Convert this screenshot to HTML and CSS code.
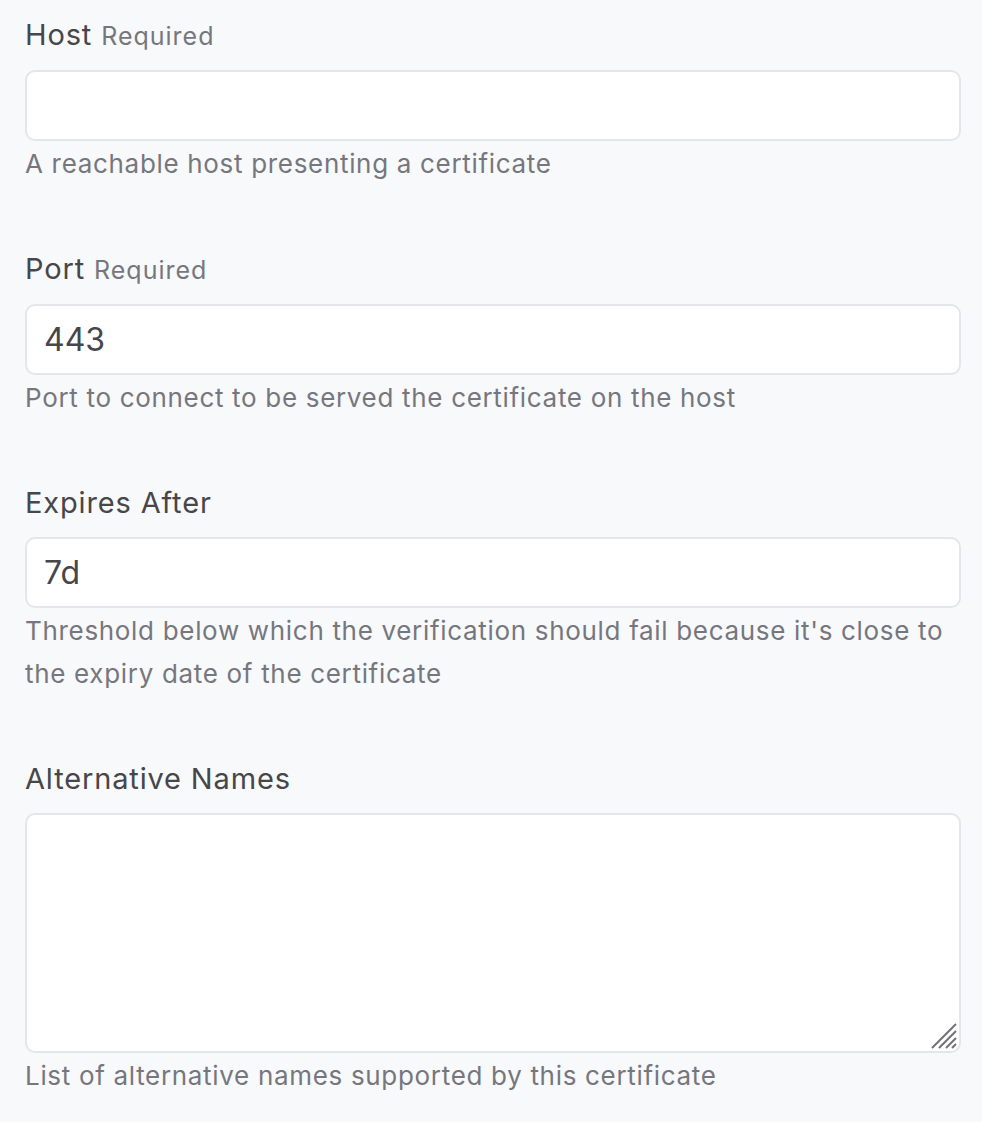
FILE: index.html
```html
<!DOCTYPE html>
<html>
<head>
<meta charset="utf-8">
<link rel="stylesheet" href="styles.css">
</head>
<body>
<form class="form">
  <div class="field">
    <label class="label">Host <span class="req">Required</span></label>
    <input class="input" type="text" value="">
    <p class="help">A reachable host presenting a certificate</p>
  </div>
  <div class="field">
    <label class="label">Port <span class="req">Required</span></label>
    <input class="input" type="text" value="443">
    <p class="help">Port to connect to be served the certificate on the host</p>
  </div>
  <div class="field">
    <label class="label">Expires After</label>
    <input class="input" type="text" value="7d">
    <p class="help">Threshold below which the verification should fail because it's close to the expiry date of the certificate</p>
  </div>
  <div class="field">
    <label class="label">Alternative Names</label>
    <div class="textarea-wrap">
      <textarea class="textarea"></textarea>
      <svg class="grip" width="26" height="26" viewBox="0 0 26 26" aria-hidden="true">
        <g stroke="#707075" stroke-width="2" stroke-linecap="butt">
          <line x1="25" y1="1" x2="1" y2="25"/>
          <line x1="25" y1="8" x2="8" y2="25"/>
          <line x1="25" y1="15" x2="15" y2="25"/>
          <line x1="25" y1="21" x2="21" y2="25"/>
        </g>
      </svg>
    </div>
    <p class="help">List of alternative names supported by this certificate</p>
  </div>
</form>
</body>
</html>
```

FILE: styles.css
```css
html, body {
  margin: 0;
  padding: 0;
  background: #f8f9fa;
}
body {
  font-family: Inter, "Noto Sans", sans-serif;
  color: #46464b;
}
.form {
  display: flex;
  flex-direction: column;
  gap: 63px;
  padding: 14px 21px 0 25px;
}
.field {
  display: flex;
  flex-direction: column;
}
.label {
  font-size: 29px;
  line-height: 42px;
  letter-spacing: 0.85px;
  color: #46464b;
  margin-bottom: 13px;
}
.req {
  font-size: 25px;
  letter-spacing: 1px;
  color: #76777e;
}
.input, .textarea {
  box-sizing: border-box;
  width: 100%;
  margin: 0;
  border: 2px solid #e5e6ea;
  border-radius: 10px;
  background: #fff;
  font-family: Inter, "Noto Sans", sans-serif;
  font-size: 32px;
  color: #46464b;
  padding: 0 17px;
  outline: none;
}
.input {
  height: 71px;
}
.textarea-wrap {
  position: relative;
}
.textarea {
  height: 240px;
  display: block;
  resize: none;
}
.grip {
  position: absolute;
  right: 4px;
  bottom: 4px;
}
.help {
  margin: 2px 0 0;
  font-size: 26px;
  line-height: 42px;
  letter-spacing: 0.68px;
  color: #76777e;
}
.field:nth-child(3) .help {
  line-height: 42.5px;
}
```
